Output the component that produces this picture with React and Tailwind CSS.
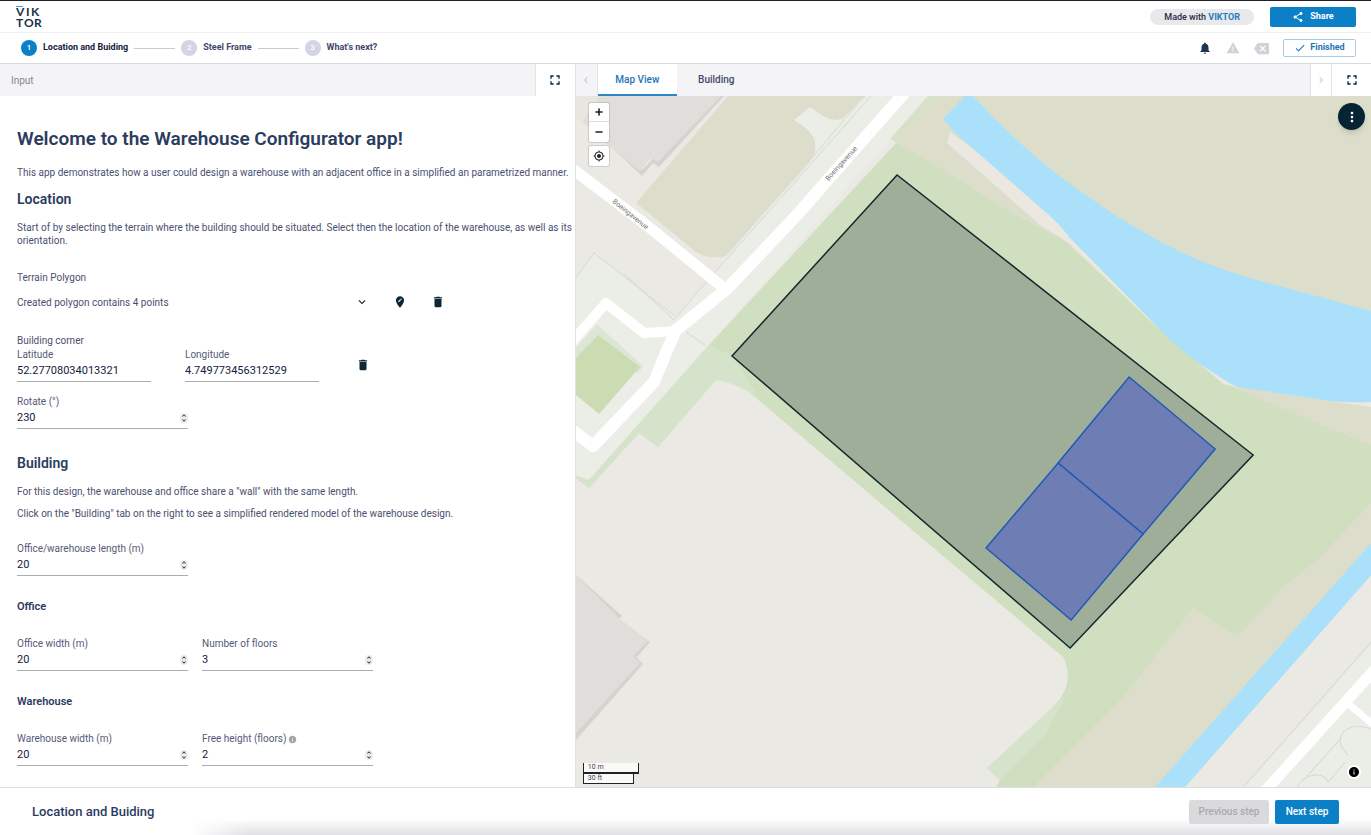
import { useState } from 'react';
import {
  MdBackspace,
  MdCheck,
  MdChevronLeft,
  MdChevronRight,
  MdDelete,
  MdEditLocation,
  MdExpandMore,
  MdFullscreen,
  MdInfo,
  MdMoreVert,
  MdMyLocation,
  MdNotifications,
  MdShare,
  MdUnfoldMore,
  MdWarning,
} from 'react-icons/md';

const STEPS = ['Location and Buiding', 'Steel Frame', "What's next?"];

function Logo() {
  return (
    <svg width="28" height="30" viewBox="0 0 28 30" role="img" aria-label="VIKTOR">
      <rect x="0" y="4" width="7" height="1" fill="#4a9bc9" />
      <g fontFamily="Lato, sans-serif" fontSize="12" fontWeight="700" fill="#1b3147">
        <text x="0 10 15" y="14">VIK</text>
        <text x="0 8 18" y="25">TOR</text>
      </g>
    </svg>
  );
}

function Header() {
  return (
    <header className="flex h-8 shrink-0 items-center border-t border-[#222226] pr-[15px] pl-4">
      <Logo />
      <div className="ml-auto flex items-center gap-4">
        <span className="rounded-full bg-[#e9e9ec] px-3.5 text-[9px] leading-4 font-medium text-[#1f2c44]">
          Made with <a href="#viktor" className="font-bold text-[#1f7fc0]">VIKTOR</a>
        </span>
        <button className="flex h-5 w-[86px] items-center justify-center gap-1.5 rounded-xs bg-[#0b80c6] text-[9px] font-bold text-white">
          <MdShare size={12} />
          Share
        </button>
      </div>
    </header>
  );
}

function Stepper() {
  return (
    <nav className="flex h-8 shrink-0 items-center border-y border-t-[#f0f0f2] border-b-[#d9dade] pr-[15px] pl-[21px]">
      <ol className="flex items-center gap-1.5 text-[9px] font-bold">
        {STEPS.map((step, i) => (
          <li key={step} className="flex items-center gap-1.5">
            {i > 0 && <span className="h-px w-[41px] bg-[#c9cad0]" />}
            <span
              className={`flex size-4 items-center justify-center rounded-full text-[8px] font-medium text-white ${
                i === 0 ? 'bg-[#0b80c6]' : 'bg-[#d3d5e4]'
              }`}
            >
              {i + 1}
            </span>
            <a href={`#step-${i + 1}`} className={i === 0 ? 'text-[#14233c]' : 'text-[#43486a]'}>
              {step}
            </a>
          </li>
        ))}
      </ol>
      <div className="ml-auto flex items-center gap-3.5">
        <button aria-label="Notifications"><MdNotifications size={14} className="text-[#1f3352]" /></button>
        <button aria-label="Warnings"><MdWarning size={14} className="text-[#d0d1da]" /></button>
        <button aria-label="Clear"><MdBackspace size={15} className="text-[#d0d1da]" /></button>
        <button className="flex h-[18px] w-[73px] items-center justify-center gap-1 rounded-xs border border-[#a9cbe6] text-[9px] font-bold text-[#2474b5]">
          <MdCheck size={12} />
          Finished
        </button>
      </div>
    </nav>
  );
}

function Field({ label, defaultValue, type = 'number', className = 'w-[171px]', info }) {
  const id = label.toLowerCase().replace(/[^a-z]+/g, '-');

  return (
    <div className={className}>
      <div className="flex items-center gap-0.5 text-[10px] leading-[14px] text-[#555a78]">
        <label htmlFor={id}>{label}</label>
        {info && <MdInfo size={9} className="text-[#a3a5ab]" />}
      </div>
      <div className="flex h-5 items-center border-b border-[#a9acb0] pb-0.5">
        <input
          id={id}
          type={type}
          defaultValue={defaultValue}
          className="h-4 w-full min-w-0 text-[11px] text-[#14223e] outline-none [appearance:textfield] [&::-webkit-inner-spin-button]:appearance-none"
        />
        {type === 'number' && (
          <button
            type="button"
            aria-label={`Step ${label}`}
            className="flex h-2.5 w-2 shrink-0 items-center justify-center rounded-full bg-[#ececee] text-[#333]"
          >
            <MdUnfoldMore size={10} className="shrink-0" />
          </button>
        )}
      </div>
    </div>
  );
}

function InputPanel() {
  return (
    <section className="flex w-[42%] shrink-0 flex-col border-r border-[#e2e2e6]">
      <div className="flex h-8 shrink-0 items-center bg-[#f4f4f7]">
        <h2 className="pl-[11px] text-[10px] text-[#85868c]">Input</h2>
        <button
          aria-label="Expand input"
          className="ml-auto flex h-8 w-10 items-center justify-center border-l border-[#e2e2e6] bg-white"
        >
          <MdFullscreen size={16} className="text-[#10263a]" />
        </button>
      </div>

      <form className="min-h-0 flex-1 overflow-hidden pt-[29px] pr-0.5 pl-[17px] text-[10px] leading-[13px] text-[#4b5070]">
        <h1 className="text-[19px] leading-7 font-semibold text-[#2b3c60]">
          Welcome to the Warehouse Configurator app!
        </h1>
        <p className="mt-[13px]">
          This app demonstrates how a user could design a warehouse with an adjacent office in a simplified an
          parametrized manner.
        </p>

        <h2 className="mt-3 text-sm leading-4 font-semibold text-[#2b3c60]">Location</h2>
        <p className="mt-3.5">
          Start of by selecting the terrain where the building should be situated. Select then the location of the
          warehouse, as well as its orientation.
        </p>

        <div className="mt-6 leading-[14px]">Terrain Polygon</div>
        <div className="mt-[7px] flex h-5 w-[428px] items-center">
          <span>Created polygon contains 4 points</span>
          <div className="ml-auto flex items-center gap-6 text-[#0f2635]">
            <button type="button" aria-label="Show points"><MdExpandMore size={14} /></button>
            <button type="button" aria-label="Edit polygon"><MdEditLocation size={14} /></button>
            <button type="button" aria-label="Delete polygon"><MdDelete size={14} /></button>
          </div>
        </div>

        <div className="mt-[22px] leading-[14px]">Building corner</div>
        <div className="flex items-center">
          <Field label="Latitude" type="text" defaultValue="52.27708034013321" className="mr-[34px] w-[134px]" />
          <Field label="Longitude" type="text" defaultValue="4.749773456312529" className="mr-[37px] w-[134px]" />
          <button type="button" aria-label="Delete corner" className="text-[#0f2635]">
            <MdDelete size={14} />
          </button>
        </div>
        <div className="mt-[13px]">
          <Field label="Rotate (°)" defaultValue="230" />
        </div>

        <h2 className="mt-[26px] text-sm leading-4 font-semibold text-[#2b3c60]">Building</h2>
        <p className="mt-3.5">For this design, the warehouse and office share a "wall" with the same length.</p>
        <p className="mt-[9px]">
          Click on the "Building" tab on the right to see a simplified rendered model of the warehouse design.
        </p>
        <div className="mt-[22px]">
          <Field label="Office/warehouse length (m)" defaultValue="20" />
        </div>

        <h3 className="mt-[23px] text-[11px] leading-4 font-semibold text-[#2b3c60]">Office</h3>
        <div className="mt-[22px] flex gap-3.5">
          <Field label="Office width (m)" defaultValue="20" />
          <Field label="Number of floors" defaultValue="3" />
        </div>

        <h3 className="mt-[23px] text-[11px] leading-4 font-semibold text-[#2b3c60]">Warehouse</h3>
        <div className="mt-[22px] flex gap-3.5">
          <Field label="Warehouse width (m)" defaultValue="20" />
          <Field label="Free height (floors)" defaultValue="2" info />
        </div>
      </form>
    </section>
  );
}

function MapDrawing() {
  return (
    <svg
      className="absolute inset-0 h-full w-full"
      viewBox="576 96 795 691"
      preserveAspectRatio="xMidYMid slice"
      role="img"
      aria-label="Map"
    >
      <rect x="576" y="96" width="795" height="691" fill="#ebe9e4" />

      {/* fields on the east side */}
      <path d="M928 96H1371V560L1155 787H1010L1100 660L896 143Z" fill="#dcdecb" />

      {/* field between the roads */}
      <path
        d="M728 96L636 203L696 252Q708 260 726 256L808 164Q819 152 814 138Q808 128 794 120L810 107L824 117Q833 122 842 119L866 96Z"
        fill="#dcdecb"
      />

      {/* road verge */}
      <path
        d="M866 96H928L709 345L589 480L576 474V280L594 253L676 318L726 258L808 164Q819 152 814 138Q808 128 794 120L810 107L824 117Q833 122 842 119Z"
        fill="#ebede7"
      />
      <g fill="none" stroke="#dbdcd7" strokeWidth="1">
        <path d="M871 96L715 272L674 320L624 274" />
        <path d="M864 96L812 158L720 258" />
        <path d="M576 277L594 253L654 300L675 316" />
        <path d="M686 332L705 345" />
      </g>

      {/* buildings */}
      <path d="M582 122L603 98L610 146L642 176L653 163L659 167L724 96H715L642 170Z" fill="#d5d3cf" />
      <path d="M576 96H721L658 162L651 158L640 171L609 146L582 121Z" fill="#e0deda" />
      <path d="M576 96H600L583 121L607 146L576 116Z" fill="#e8e6e0" />
      <path d="M576 575L622 616L619 619L650 642L637 657L634 655L643 664L576 740Z" fill="#d5d3cf" />
      <path d="M576 575L620 619L648 641L633 656L640 663L576 733Z" fill="#e0deda" />

      {/* grass around the terrain */}
      <path
        d="M938 96L896 143L709 345L589 480L576 476V478L589 488L639 433L658 447L714 382Q719 376 749 392L950 562L1063 657Q1076 684 1053 707L987 768L1000 780L996 787H1033L1123 697L1193 608L1237 637L1283 587L1317 560L1371 503V445L1363 442L1227 385L1067 242L1010 212L930 162L896 143Z"
        fill="#d0dfc0"
      />
      <path
        d="M709 345L589 480L576 476V478L589 488L639 433L658 447L714 382Q719 376 749 392L760 400L732 356Z"
        fill="#d6e3cb"
      />
      <path d="M1072 684Q1070 692 1053 707L987 768L1000 780L1045 735Z" fill="#d6e3cb" />
      <path d="M928 96H942L898 143L890 139Z" fill="#d8e0c8" />

      {/* sandy bank and water */}
      <path d="M950 132L947 143L1040 225L1067 242L1148 319L1223 384L1243 389L1371 407V398L1200 340L1070 220Z" fill="#ebe8e2" />
      <path
        d="M1243 388L1330 401L1371 408V445L1227 385Z"
        fill="#dcdecb"
      />
      <path
        d="M943 119L965 96H973Q1000 126 1030 152Q1060 178 1090 198Q1136 231 1187 255Q1220 270 1257 280L1371 311V402Q1350 403 1330 401L1243 388Q1232 386 1223 379Q1196 363 1170 340L1070 238Q1058 222 1043 210L955 133Z"
        fill="#aae0f9"
      />

      {/* canal and south east block */}
      <path d="M1371 560L1170 787H1371Z" fill="#ebe9e4" />
      <path d="M1371 645L1245 787H1371Z" fill="#ebede7" />
      <path d="M1371 543V575L1185 787H1155Z" fill="#aae0f9" />
      <g fill="none" stroke="#d9d9d4" strokeWidth="1">
        <path d="M1371 642L1243 787" />
        <path d="M1297 787Q1305 774 1318 775Q1326 776 1328 782L1345 762M1307 776L1341 738" />
        <path d="M1348 755Q1335 743 1343 732Q1354 722 1371 729" />
      </g>

      {/* small park */}
      <path d="M597 324L643 366L638 374L596 336L576 360V348Z" fill="#dde5d5" />
      <path d="M598 335L640 367L599 414L576 395V358Z" fill="#cbdcb2" />

      {/* roads */}
      <g fill="none" stroke="#ffffff" strokeLinejoin="round">
        <path d="M906 91L796 216L728 288L676 330L668 348L654 382L593 446L572 430" strokeWidth="12" />
        <path d="M570 167L650 228L725 289" strokeWidth="11" />
        <path d="M676 331L644 333L606 303L570 344" strokeWidth="10" />
        <path d="M1264 792L1376 668" strokeWidth="11" />
        <path d="M1347 703L1376 727" strokeWidth="7" />
      </g>

      <g fontFamily="Roboto, sans-serif" fontSize="7" fill="#73736f" textAnchor="middle">
        <text transform="translate(843 165) rotate(-48)">Boeingavenue</text>
        <text transform="translate(629 216) rotate(39)">Boeingavenue</text>
      </g>

      {/* terrain and buildings of the model */}
      <path d="M897 175L732 356L1070 648L1253 455Z" fill="#9eae99" stroke="#14282c" strokeWidth="1.5" />
      <g fill="#6e7eb5" stroke="#2259b4" strokeWidth="1.5">
        <path d="M1129 377L1215 449L1143 534L1058 463Z" />
        <path d="M1058 463L1143 534L1071 620L986 548Z" />
      </g>
    </svg>
  );
}

function MapControls() {
  return (
    <>
      <div className="absolute top-[7px] left-[13px] flex flex-col gap-1">
        <div className="flex flex-col divide-y divide-[#dddddd] rounded-xs bg-white shadow-[0_0_0_1px_rgba(0,0,0,0.12)]">
          <button aria-label="Zoom in" className="flex h-[19px] w-5 items-center justify-center">
            <svg width="8" height="8" viewBox="0 0 8 8" stroke="#222" strokeWidth="1.6" strokeLinecap="round">
              <path d="M4 1V7M1 4H7" />
            </svg>
          </button>
          <button aria-label="Zoom out" className="flex h-5 w-5 items-center justify-center">
            <svg width="8" height="8" viewBox="0 0 8 8" stroke="#222" strokeWidth="1.6" strokeLinecap="round">
              <path d="M1 4H7" />
            </svg>
          </button>
        </div>
        <button
          aria-label="My location"
          className="flex size-5 items-center justify-center rounded-xs bg-white text-[#222] shadow-[0_0_0_1px_rgba(0,0,0,0.12)]"
        >
          <MdMyLocation size={12} />
        </button>
      </div>

      <button
        aria-label="Map menu"
        className="absolute top-[7px] right-1.5 flex size-[27px] items-center justify-center rounded-full bg-[#062434] text-white shadow-md"
      >
        <MdMoreVert size={16} />
      </button>

      <div className="absolute bottom-[3px] left-[7px] text-[7px] leading-[9px] text-[#444]">
        <div className="w-14 border-x border-b-2 border-[#222] bg-white/75 pl-1">10 m</div>
        <div className="w-[51px] border-x border-b border-[#222] bg-white/75 pl-1">30 ft</div>
      </div>

      <button
        aria-label="Attribution"
        className="absolute right-2.5 bottom-2 flex size-3.5 items-center justify-center rounded-full bg-white text-black"
      >
        <MdInfo size={12} />
      </button>
    </>
  );
}

function ViewPanel() {
  const [tab, setTab] = useState('Map View');

  return (
    <section className="flex min-w-0 flex-1 flex-col">
      <div className="flex h-8 shrink-0 items-stretch bg-[#f4f4f7] text-[10px] font-medium">
        <button aria-label="Previous tab" className="flex w-[22px] items-center justify-center border-r border-[#e2e2e6] text-[#c6c7cc]">
          <MdChevronLeft size={12} />
        </button>
        {['Map View', 'Building'].map((name) => (
          <button
            key={name}
            onClick={() => setTab(name)}
            className={`w-[79px] border-b-2 ${
              tab === name ? 'border-[#2c86c8] bg-white text-[#2474b5]' : 'border-transparent text-[#43486a]'
            }`}
          >
            {name}
          </button>
        ))}
        <button
          aria-label="Next tab"
          className="ml-auto flex w-[21px] items-center justify-center border-l border-[#e2e2e6] bg-white text-[#c6c7cc]"
        >
          <MdChevronRight size={12} />
        </button>
        <button aria-label="Expand view" className="flex w-10 items-center justify-center border-l border-[#e2e2e6] bg-white">
          <MdFullscreen size={16} className="text-[#10263a]" />
        </button>
      </div>
      <div className="relative min-h-0 flex-1 overflow-hidden">
        <MapDrawing />
        <MapControls />
      </div>
    </section>
  );
}

function Footer() {
  return (
    <footer className="relative flex h-12 shrink-0 items-center border-t border-[#dcdde0] pr-8 pl-8">
      {/* soft shade along the lower edge */}
      <div className="pointer-events-none absolute right-0 bottom-0 left-[190px] h-4 bg-linear-to-t from-[#dfdfe4] to-transparent [mask-image:linear-gradient(to_right,transparent,black_60px)]" />
      <h2 className="text-[13px] font-medium text-[#2b3c60]">Location and Buiding</h2>
      <div className="relative ml-auto flex gap-1.5 text-[10px] font-medium">
        <button disabled className="h-6 w-20 rounded-xs bg-[#dadadc] text-[#a9a9ad]">
          Previous step
        </button>
        <button className="h-6 w-16 rounded-xs bg-[#0b80c6] text-white">Next step</button>
      </div>
    </footer>
  );
}

export default function App() {
  return (
    <div className="flex h-screen flex-col bg-white font-[Roboto,sans-serif]">
      <Header />
      <Stepper />
      <main className="flex min-h-0 flex-1">
        <InputPanel />
        <ViewPanel />
      </main>
      <Footer />
    </div>
  );
}
